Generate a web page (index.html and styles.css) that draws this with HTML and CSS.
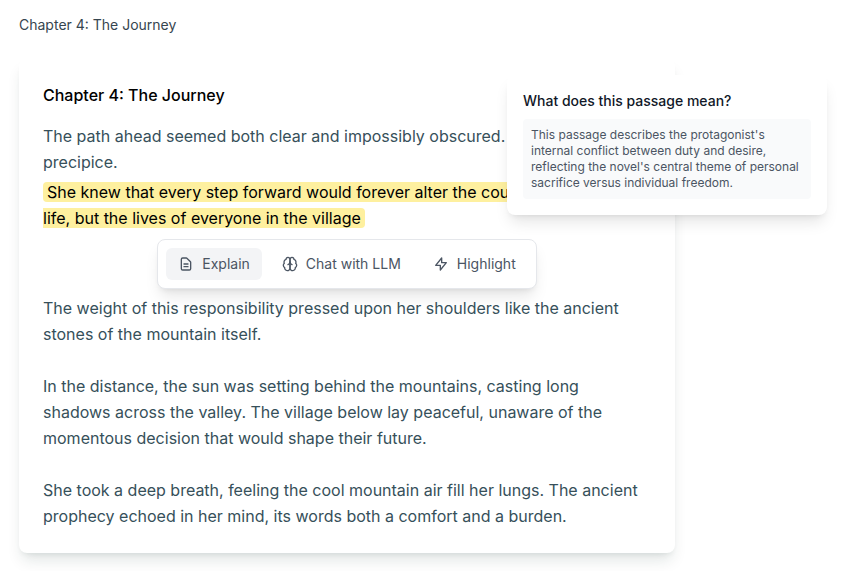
FILE: index.html
```
<!DOCTYPE html>
<html lang="en">
<head>
	<meta charset="utf-8">
	<title>Chapter 4: The Journey</title>
	<meta name="viewport" content="width=device-width, initial-scale=1">
	<link rel="stylesheet" href="styles.css">
</head>
<body>
<header class="topbar">Chapter 4: The Journey</header>
<main class="reader">
	<article class="page">
		<h1>Chapter 4: The Journey</h1>
		<p>The path ahead seemed both clear and impossibly obscured. She stood at the precipice.</p>
		<p class="passage"><mark>She knew that every step forward would forever alter the course of not just her life, but the lives of everyone in the village</mark></p>
		<div class="toolbar">
			<button type="button" class="current">
				<svg viewBox="0 0 24 24"><path d="M9 12h6m-6 4h6m2 5H7a2 2 0 0 1-2-2V5a2 2 0 0 1 2-2h5.586a1 1 0 0 1 .707.293l5.414 5.414a1 1 0 0 1 .293.707V19a2 2 0 0 1-2 2z"/></svg>
				Explain
			</button>
			<button type="button">
				<svg viewBox="0 0 24 24"><path d="M12 5a3 3 0 1 0-5.997.125 4 4 0 0 0-2.526 5.77 4 4 0 0 0 .556 6.588A4 4 0 1 0 12 18Z"/><path d="M12 5a3 3 0 1 1 5.997.125 4 4 0 0 1 2.526 5.77 4 4 0 0 1-.556 6.588A4 4 0 1 1 12 18Z"/><path d="M15 13a4.5 4.5 0 0 1-3-4 4.5 4.5 0 0 1-3 4"/></svg>
				Chat with LLM
			</button>
			<button type="button">
				<svg viewBox="0 0 24 24"><path d="M13 10V3L4 14h7v7l9-11h-7z"/></svg>
				Highlight
			</button>
		</div>
		<p>The weight of this responsibility pressed upon her shoulders like the ancient stones of the mountain itself.</p>
		<p>In the distance, the sun was setting behind the mountains, casting long shadows across the valley. The village below lay peaceful, unaware of the momentous decision that would shape their future.</p>
		<p>She took a deep breath, feeling the cool mountain air fill her lungs. The ancient prophecy echoed in her mind, its words both a comfort and a burden.</p>
		<aside class="answer">
			<h2>What does this passage mean?</h2>
			<p>This passage describes the protagonist's internal conflict between duty and desire, reflecting the novel's central theme of personal sacrifice versus individual freedom.</p>
		</aside>
	</article>
</main>
</body>
</html>
```
FILE: styles.css
```
body,h1,h2,p{margin:0;padding:0;}
body{color:#374151;background:#fff;font:16px/26px Inter,"Liberation Sans",sans-serif;}
.topbar{padding:15px 19px 0;font-size:14px;line-height:20px;color:#36454f;}
.reader{padding:24px 177px 18px 19px;}
.page{position:relative;padding:24px;background:#fff;border-radius:8px;box-shadow:0 10px 15px -3px rgba(20,50,45,.12),0 4px 6px -4px rgba(20,50,45,.12);}
.page h1{margin-bottom:16px;font-size:16px;line-height:24px;font-weight:500;color:#000;}
.page > p{padding-right:4px;color:#36505a;}
.page > p + p{margin-top:26px;}
.page > .passage.passage{margin-top:4px;}
mark{padding:0 4px;background:#fef09f;color:#000;border-radius:4px;}

.toolbar{display:flex;gap:8px;width:fit-content;box-sizing:border-box;margin:8px auto 6px;padding:8px;background:#fff;border:1px solid #e5e7eb;border-radius:8px;box-shadow:0 10px 15px -3px rgba(0,0,0,.1),0 4px 6px -4px rgba(0,0,0,.1);}
.toolbar button{display:flex;align-items:center;gap:8px;height:32px;padding:0 12px;border:0;border-radius:6px;background:none;color:#4b5563;font:14px/20px Inter,"Liberation Sans",sans-serif;cursor:pointer;}
.toolbar button.current,.toolbar button:hover{background:#f3f4f6;}
.toolbar svg{width:16px;height:16px;fill:none;stroke:currentColor;stroke-width:2;stroke-linecap:round;stroke-linejoin:round;}

/* answer card hangs over the right edge of the page */
.answer{position:absolute;top:16px;right:-152px;width:320px;box-sizing:border-box;padding:16px;background:#fff;border-radius:8px;box-shadow:0 10px 15px -3px rgba(0,0,0,.1),0 4px 6px -4px rgba(0,0,0,.1);}
.answer h2{margin-bottom:8px;font-size:14px;line-height:20px;font-weight:500;color:#111827;}
.answer p{padding:8px;background:#f9fafb;border-radius:4px;color:#4b5563;font-size:12px;line-height:16px;}
```
